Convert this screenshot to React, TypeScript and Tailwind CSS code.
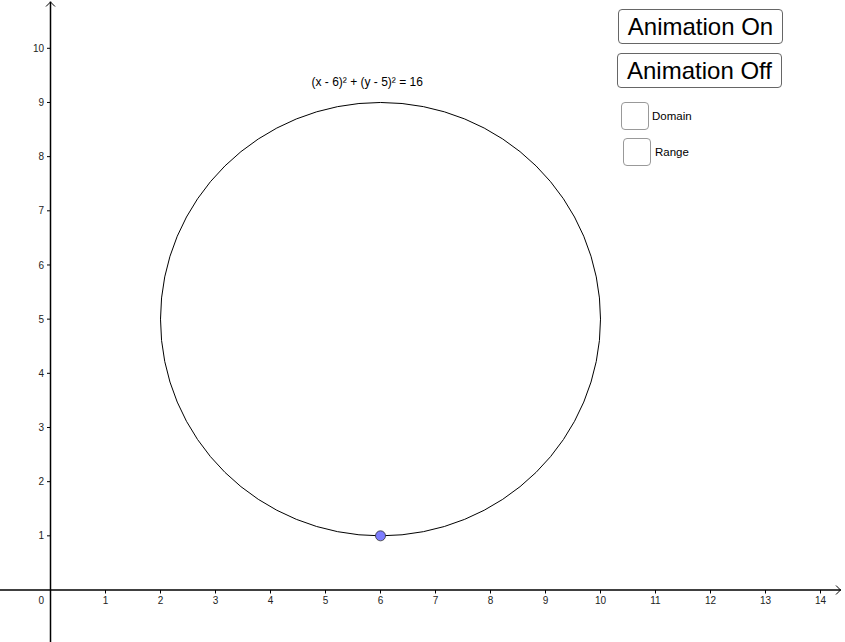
import React from "react";

const OX = 50.5;
const OY = 590;
const UX = 55;
const UY = 54.17;

export default function App() {
  const xs = Array.from({ length: 14 }, (_, i) => i + 1);
  const ys = Array.from({ length: 10 }, (_, i) => i + 1);
  return (
    <div
      className="relative w-[845px] h-[642px] bg-white overflow-hidden"
      style={{ fontFamily: '"Liberation Sans", Arial, sans-serif' }}
    >
      <svg className="absolute inset-0" width={845} height={642} viewBox="0 0 845 642">
        {/* axes */}
        <line x1={OX} y1={1.5} x2={OX} y2={642} stroke="#000" strokeWidth={1.5} />
        <line x1={0} y1={OY} x2={841} y2={OY} stroke="#000" strokeWidth={1.5} />
        <polyline points={`${OX - 4.5},6.5 ${OX},2 ${OX + 4.5},6.5`} fill="none" stroke="#000" strokeWidth={1} />
        <polyline points={`836,${OY - 4.5} 840.5,${OY} 836,${OY + 4.5}`} fill="none" stroke="#000" strokeWidth={1} />
        {xs.map((i) => {
          const x = OX + UX * i;
          return (
            <g key={`x${i}`}>
              <line x1={x} y1={OY} x2={x} y2={OY + 3.5} stroke="#000" strokeWidth={1} />
              <text x={x} y={603.5} fontSize={10} textAnchor="middle" fill="#222">
                {i}
              </text>
            </g>
          );
        })}
        {ys.map((j) => {
          const y = OY - UY * j;
          return (
            <g key={`y${j}`}>
              <line x1={OX - 3.5} y1={y} x2={OX} y2={y} stroke="#000" strokeWidth={1} />
              <text x={44} y={y + 3.6} fontSize={10} textAnchor="end" fill="#222">
                {j}
              </text>
            </g>
          );
        })}
        <text x={44} y={603.5} fontSize={10} textAnchor="end" fill="#222">
          0
        </text>
        {/* circle */}
        <ellipse cx={OX + 6 * UX} cy={OY - 5 * UY} rx={4 * UX} ry={4 * UY} fill="none" stroke="#000" strokeWidth={1} />
        <text x={311.5} y={86} fontSize={12} fill="#000">
          (x - 6)² + (y - 5)² = 16
        </text>
        {/* point */}
        <circle cx={OX + 6 * UX} cy={OY - UY} r={5} fill="#7d7dff" stroke="#333" strokeWidth={0.8} />
      </svg>

      <div className="absolute left-[618px] top-[9px] flex flex-col gap-[9px]">
        <button className="w-[165px] h-[35px] border border-[#666] rounded-[4px] bg-white text-[24px] leading-none text-black flex items-center justify-center">
          Animation On
        </button>
        <button className="w-[165px] h-[35px] -ml-[1px] border border-[#666] rounded-[4px] bg-white text-[24px] leading-none text-black flex items-center justify-center">
          Animation Off
        </button>
      </div>

      <div className="absolute left-[621px] top-[102px] flex items-center gap-[3px]">
        <div className="w-[28px] h-[28px] border border-[#999] rounded-[4px] bg-white" />
        <span className="text-[11.5px] text-black pt-[2px]">Domain</span>
      </div>
      <div className="absolute left-[623px] top-[138px] flex items-center gap-[4px]">
        <div className="w-[28px] h-[28px] border border-[#999] rounded-[4px] bg-white" />
        <span className="text-[11.5px] text-black pt-[2px]">Range</span>
      </div>
    </div>
  );
}
